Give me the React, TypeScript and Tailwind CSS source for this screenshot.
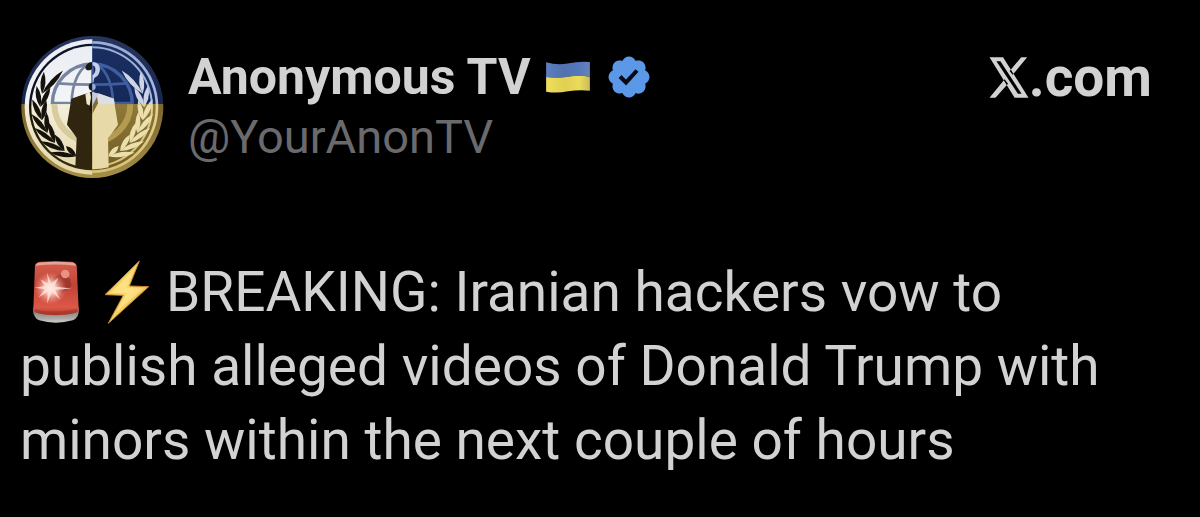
import React from "react";

type Leaf = { x: number; y: number; angle: number; length: number };

const STEM_RADIUS = 156;

function leafPair(degrees: number, inner: number, outer: number): Leaf[] {
  const radians = (degrees * Math.PI) / 180;
  const x = Math.round(241 + STEM_RADIUS * Math.cos(radians));
  const y = Math.round(237 + STEM_RADIUS * Math.sin(radians));
  return [
    { x, y, angle: degrees + 117, length: inner },
    { x, y, angle: degrees + 80, length: outer },
  ];
}

const leaves: Leaf[] = [
  ...leafPair(108, 44, 80),
  ...leafPair(122, 58, 78),
  ...leafPair(136, 64, 76),
  ...leafPair(150, 64, 74),
  ...leafPair(165, 62, 70),
  ...leafPair(180, 66, 64),
  ...leafPair(195, 94, 66),
];

function Laurel() {
  return (
    <g>
      {leaves.map((leaf, i) => (
        <path
          key={i}
          transform={`translate(${leaf.x} ${leaf.y}) rotate(${leaf.angle})`}
          d={`M0 0Q${leaf.length * 0.5} -15 ${leaf.length} 0Q${leaf.length * 0.5} 15 0 0Z`}
        />
      ))}
    </g>
  );
}

function Avatar() {
  return (
    <svg viewBox="24 24 432 432" className="size-36 shrink-0" role="img" aria-label="Anonymous TV">
      <defs>
        <clipPath id="left"><rect x="0" y="0" width="241" height="480" /></clipPath>
        <clipPath id="right"><rect x="241" y="0" width="240" height="480" /></clipPath>
        <clipPath id="upperHalf"><rect x="0" y="0" width="480" height="229" /></clipPath>
        <clipPath id="lowerHalf"><rect x="0" y="229" width="480" height="240" /></clipPath>
        <linearGradient id="rim" x1="0" y1="24" x2="0" y2="450" gradientUnits="userSpaceOnUse">
          <stop offset="0" stopColor="#27355c" />
          <stop offset="0.48" stopColor="#17264e" />
          <stop offset="0.48" stopColor="#7c6630" />
          <stop offset="1" stopColor="#a58d48" />
        </linearGradient>
        <linearGradient id="paper" x1="0" y1="24" x2="0" y2="450" gradientUnits="userSpaceOnUse">
          <stop offset="0" stopColor="#e9ecf3" />
          <stop offset="0.48" stopColor="#f4f5f7" />
          <stop offset="0.48" stopColor="#f3efdc" />
          <stop offset="1" stopColor="#e3d6a2" />
        </linearGradient>
        <linearGradient id="ink" x1="0" y1="24" x2="0" y2="450" gradientUnits="userSpaceOnUse">
          <stop offset="0" stopColor="#0c1328" />
          <stop offset="0.48" stopColor="#10131b" />
          <stop offset="0.48" stopColor="#171307" />
          <stop offset="1" stopColor="#3a2e10" />
        </linearGradient>
        <linearGradient id="field" x1="0" y1="24" x2="0" y2="450" gradientUnits="userSpaceOnUse">
          <stop offset="0" stopColor="#1b2f60" />
          <stop offset="0.48" stopColor="#14285a" />
          <stop offset="0.48" stopColor="#8f7939" />
          <stop offset="1" stopColor="#6e5920" />
        </linearGradient>
        <linearGradient id="light" x1="0" y1="24" x2="0" y2="450" gradientUnits="userSpaceOnUse">
          <stop offset="0" stopColor="#98abd6" />
          <stop offset="0.48" stopColor="#a9bbe4" />
          <stop offset="0.48" stopColor="#e6d391" />
          <stop offset="1" stopColor="#d7c074" />
        </linearGradient>
        <g id="globeTop" fill="none" strokeWidth="8">
          <circle cx="241" cy="228" r="120" strokeWidth="10" />
          <ellipse cx="241" cy="228" rx="62" ry="120" />
          <path d="M241 105V229M120 225H362M136 166Q241 174 346 166" />
        </g>
        <path
          id="suit"
          d="M241 192L218 198L178 212L165 290L186 318L194 330L190 418Q241 430 290 418L288 330L298 318L318 290L305 212L264 198Z"
        />
      </defs>

      <circle cx="241" cy="237" r="213" fill="url(#rim)" />

      <g clipPath="url(#left)">
        <circle cx="241" cy="237" r="203" fill="url(#paper)" />
        <circle cx="241" cy="237" r="190" fill="url(#ink)" />
        <circle cx="241" cy="237" r="183" fill="url(#paper)" />
        <g clipPath="url(#upperHalf)" stroke="#77849f">
          <use href="#globeTop" />
        </g>
        <g clipPath="url(#lowerHalf)">
          <circle cx="241" cy="228" r="114" fill="none" stroke="#d8cc9e" strokeWidth="18" />
        </g>
        <g fill="#15120c"><Laurel /></g>
        <use href="#suit" fill="#30250f" />
        <path d="M241 192L220 197L224 228L241 238Z" fill="#efe7c9" />
        <path d="M234 192H241V262L231 244L237 208Z" fill="#211a0c" />
        <path d="M241 102Q222 104 220 119Q222 130 236 126L241 121Z" fill="#191919" />
        <ellipse cx="240" cy="176" rx="10" ry="11" fill="#161820" />
      </g>

      <g clipPath="url(#right)">
        <circle cx="241" cy="237" r="198" fill="url(#light)" />
        <circle cx="241" cy="237" r="190" fill="url(#field)" />
        <circle cx="241" cy="237" r="182" fill="url(#light)" />
        <circle cx="241" cy="237" r="176" fill="url(#field)" />
        <g clipPath="url(#upperHalf)" stroke="#3f5d9f">
          <use href="#globeTop" />
        </g>
        <g clipPath="url(#lowerHalf)">
          <circle cx="241" cy="228" r="114" fill="none" stroke="#b39b52" strokeWidth="18" />
        </g>
        <g clipPath="url(#upperHalf)">
          <g transform="translate(482 0) scale(-1 1)" fill="#ccd4e6"><Laurel /></g>
        </g>
        <g clipPath="url(#lowerHalf)">
          <g transform="translate(482 0) scale(-1 1)" fill="#ecdfae"><Laurel /></g>
        </g>
        <use href="#suit" fill="#e8daa8" />
        <path d="M241 192L259 198L250 234L241 242Z" fill="#c1cce3" />
        <path d="M259 196L306 212L308 229H252Z" fill="#dcdfe6" />
        <path d="M241 234L255 206L258 226L241 258Z" fill="#826a31" />
        <path d="M241 102Q264 103 264 124Q263 143 247 150L244 163H241V142Q252 135 250 121Q248 112 241 112Z" fill="#c5cfe8" />
        <circle cx="242" cy="177" r="9" fill="#9eafd2" />
      </g>
    </svg>
  );
}

function Flag() {
  return (
    <svg viewBox="142 60 136 98" className="h-8 w-[46px] shrink-0" role="img" aria-label="Ukraine">
      <defs>
        <linearGradient id="blueBand">
          <stop offset="0" stopColor="#5b7fc0" />
          <stop offset="0.4" stopColor="#5271b0" />
          <stop offset="0.75" stopColor="#5478ba" />
          <stop offset="1" stopColor="#6683ba" />
        </linearGradient>
        <linearGradient id="yellowBand">
          <stop offset="0" stopColor="#efdf5c" />
          <stop offset="0.45" stopColor="#e0cf50" />
          <stop offset="0.75" stopColor="#ecdc5c" />
          <stop offset="1" stopColor="#c9bc57" />
        </linearGradient>
      </defs>
      <path d="M143 64Q176 74 209 68Q244 60 277 63V108Q243 102 210 108Q176 114 143 109Z" fill="url(#blueBand)" />
      <path d="M143 109Q176 114 210 108Q243 102 277 108V151Q244 147 210 153Q176 160 143 154Z" fill="url(#yellowBand)" />
    </svg>
  );
}

function Verified() {
  return (
    <svg viewBox="0 0 22 22" className="size-12 shrink-0" role="img" aria-label="Verified account">
      <path
        fill="#5c98e8"
        d="M20.396 11c-.018-.646-.215-1.275-.57-1.816-.354-.54-.852-.972-1.438-1.246.223-.607.27-1.264.14-1.897-.131-.634-.437-1.218-.882-1.687-.47-.445-1.053-.75-1.687-.882-.633-.13-1.29-.083-1.897.14-.273-.587-.704-1.086-1.245-1.44S11.647 1.62 11 1.604c-.646.017-1.273.213-1.813.568s-.969.854-1.24 1.44c-.608-.223-1.267-.272-1.902-.14-.635.13-1.22.436-1.69.882-.445.47-.749 1.055-.878 1.688-.13.633-.08 1.29.144 1.896-.587.274-1.087.705-1.443 1.245-.356.54-.555 1.17-.574 1.817.02.647.218 1.276.574 1.817.356.54.856.972 1.443 1.245-.224.606-.274 1.263-.144 1.896.13.634.433 1.218.877 1.688.47.443 1.054.747 1.687.878.633.132 1.29.084 1.897-.136.274.586.705 1.084 1.246 1.439.54.354 1.17.551 1.816.569.647-.016 1.276-.213 1.817-.567s.972-.854 1.245-1.44c.604.239 1.266.296 1.903.164.636-.132 1.22-.447 1.68-.907.46-.46.776-1.044.908-1.681s.075-1.299-.165-1.903c.586-.274 1.084-.705 1.439-1.246.354-.54.551-1.17.569-1.816z"
      />
      <path
        fill="#080b14"
        d="M9.662 14.85l-3.429-3.428 1.293-1.302 2.072 2.072 4.4-4.794 1.347 1.246z"
      />
    </svg>
  );
}

function XLogo() {
  return (
    <svg viewBox="56 47 120 124" className="h-[41px] w-10 shrink-0" aria-hidden="true">
      <path
        fill="currentColor"
        fillRule="evenodd"
        d="M57 48H98L175 170H133ZM78 60L143 158H154L90 60ZM153 48H171L127 101L118 89ZM57 170L103 114L113 128L75 170Z"
      />
    </svg>
  );
}

function Siren() {
  return (
    <svg viewBox="48 30 146 190" className="h-16 w-12" role="img" aria-label="Siren">
      <defs>
        <linearGradient id="base" x1="0" x2="0" y1="0" y2="1">
          <stop offset="0" stopColor="#77706e" />
          <stop offset="0.7" stopColor="#aaa7a4" />
          <stop offset="1" stopColor="#d1cfca" />
        </linearGradient>
        <linearGradient id="dome" x1="0" x2="0" y1="0" y2="1">
          <stop offset="0" stopColor="#d4604f" />
          <stop offset="0.45" stopColor="#c04437" />
          <stop offset="0.85" stopColor="#dc5847" />
          <stop offset="1" stopColor="#b03a2e" />
        </linearGradient>
        <radialGradient id="glow">
          <stop offset="0" stopColor="#fff" />
          <stop offset="0.35" stopColor="#ffd9cf" stopOpacity="0.85" />
          <stop offset="1" stopColor="#f08c7c" stopOpacity="0" />
        </radialGradient>
      </defs>
      <path d="M51 172Q50 203 70 211Q120 226 172 211Q192 204 191 172Z" fill="url(#base)" />
      <path d="M57 44Q60 34 76 33Q120 30 166 33Q181 34 184 45L190 180Q184 195 120 196Q58 195 52 180Z" fill="url(#dome)" />
      <path d="M59 45Q60 36 77 35Q120 31 165 35Q180 36 182 45Q120 37 59 45Z" fill="#e6a497" />
      <path d="M112 80Q142 62 164 86L168 106L140 130L116 112Z" fill="#8c2c27" opacity="0.6" />
      <circle cx="149" cy="70" r="13" fill="#e99182" />
      <path d="M57 178Q118 192 186 176L187 187Q120 203 55 187Z" fill="#8e2b22" opacity="0.4" />
      <circle cx="104" cy="114" r="50" fill="url(#glow)" />
      <path d="M93 66L107 100L128 82L116 108L168 114L118 119L134 148L108 125L94 160L96 124L68 141L88 117L56 112L87 107L74 86L98 101Z" fill="#ffe3db" opacity="0.8" />
    </svg>
  );
}

function Bolt() {
  return (
    <svg viewBox="272 28 136 192" className="h-16 w-[46px]" role="img" aria-label="High voltage">
      <defs>
        <linearGradient id="bolt" x1="0" y1="0" x2="1" y2="1">
          <stop offset="0" stopColor="#efbd50" />
          <stop offset="0.5" stopColor="#fbd66a" />
          <stop offset="1" stopColor="#d99a35" />
        </linearGradient>
      </defs>
      <path d="M377 31L274 132L329 134L284 218L405 108L347 106Z" fill="url(#bolt)" stroke="#c78b31" strokeWidth="3" strokeLinejoin="round" />
      <path d="M362 54L291 126L340 128L308 184L391 113L338 112Z" fill="#fff0a0" opacity="0.5" />
    </svg>
  );
}

export default function App() {
  return (
    <main className="min-h-screen bg-black px-5 pt-9 font-['Roboto','Liberation_Sans',sans-serif] text-[#d2d2d2]">
      <article>
        <header className="flex items-start justify-between pr-7">
          <div className="flex gap-6">
            <Avatar />
            <div className="pt-3">
              <div className="flex items-center gap-[14px]">
                <h1 className="text-[50px] leading-[58px] font-bold">Anonymous TV</h1>
                <Flag />
                <Verified />
              </div>
              <a href="#profile" className="block text-[47px] leading-[62px] text-[#6a6a6d]">@YourAnonTV</a>
            </div>
          </div>
          <a href="#x" aria-label="X.com" className="flex items-center pt-3 text-[55px] leading-[58px] font-bold">
            <XLogo />
            <span>.com</span>
          </a>
        </header>
        <p className="mt-[75px] pr-12 text-[55px] leading-[74px]">
          <span className="-my-2 inline-flex items-center gap-6 pr-4 pb-2 pl-3 align-middle">
            <Siren />
            <Bolt />
          </span>
          BREAKING: Iranian hackers vow to publish alleged videos of Donald Trump with minors within the next couple of hours
        </p>
      </article>
    </main>
  );
}
